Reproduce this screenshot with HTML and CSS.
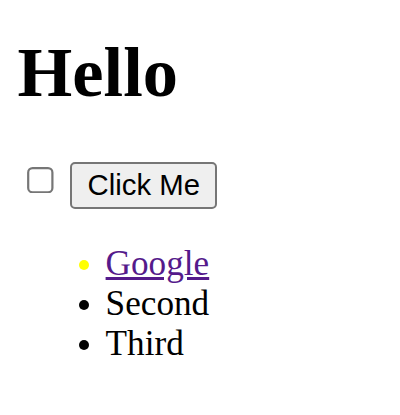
FILE: index.html
```html
<!DOCTYPE html>
<html>
<head>
<meta charset="utf-8">
<link rel="stylesheet" href="styles.css">
</head>
<body>
<div class="page">
  <h1 class="title">Hello</h1>
  <div class="row"><input type="checkbox" class="check"> <button class="btn">Click Me</button></div>
  <ul class="list">
    <li class="first"><a class="link" href="#">Google</a></li>
    <li>Second</li>
    <li>Third</li>
  </ul>
</div>
</body>
</html>
```

FILE: styles.css
```css
html, body {
  margin: 0;
  padding: 0;
  background: #fff;
}
.page {
  zoom: 2.2;
  padding: 8px;
  font-family: "Liberation Serif", "Times New Roman", serif;
  font-size: 16px;
  color: #000;
}
.title {
  font-size: 32px;
  font-weight: bold;
  margin: 6.6px 0 21.44px;
}
.row {
  font-size: 16px;
}
.btn {
  font-family: "Liberation Sans", Arial, sans-serif;
  font-size: 13.333px;
}
.list {
  margin: 16px 0;
  padding-left: 40px;
}
.first::marker {
  color: #ffff00;
}
.link {
  color: #551a8b;
}
```
